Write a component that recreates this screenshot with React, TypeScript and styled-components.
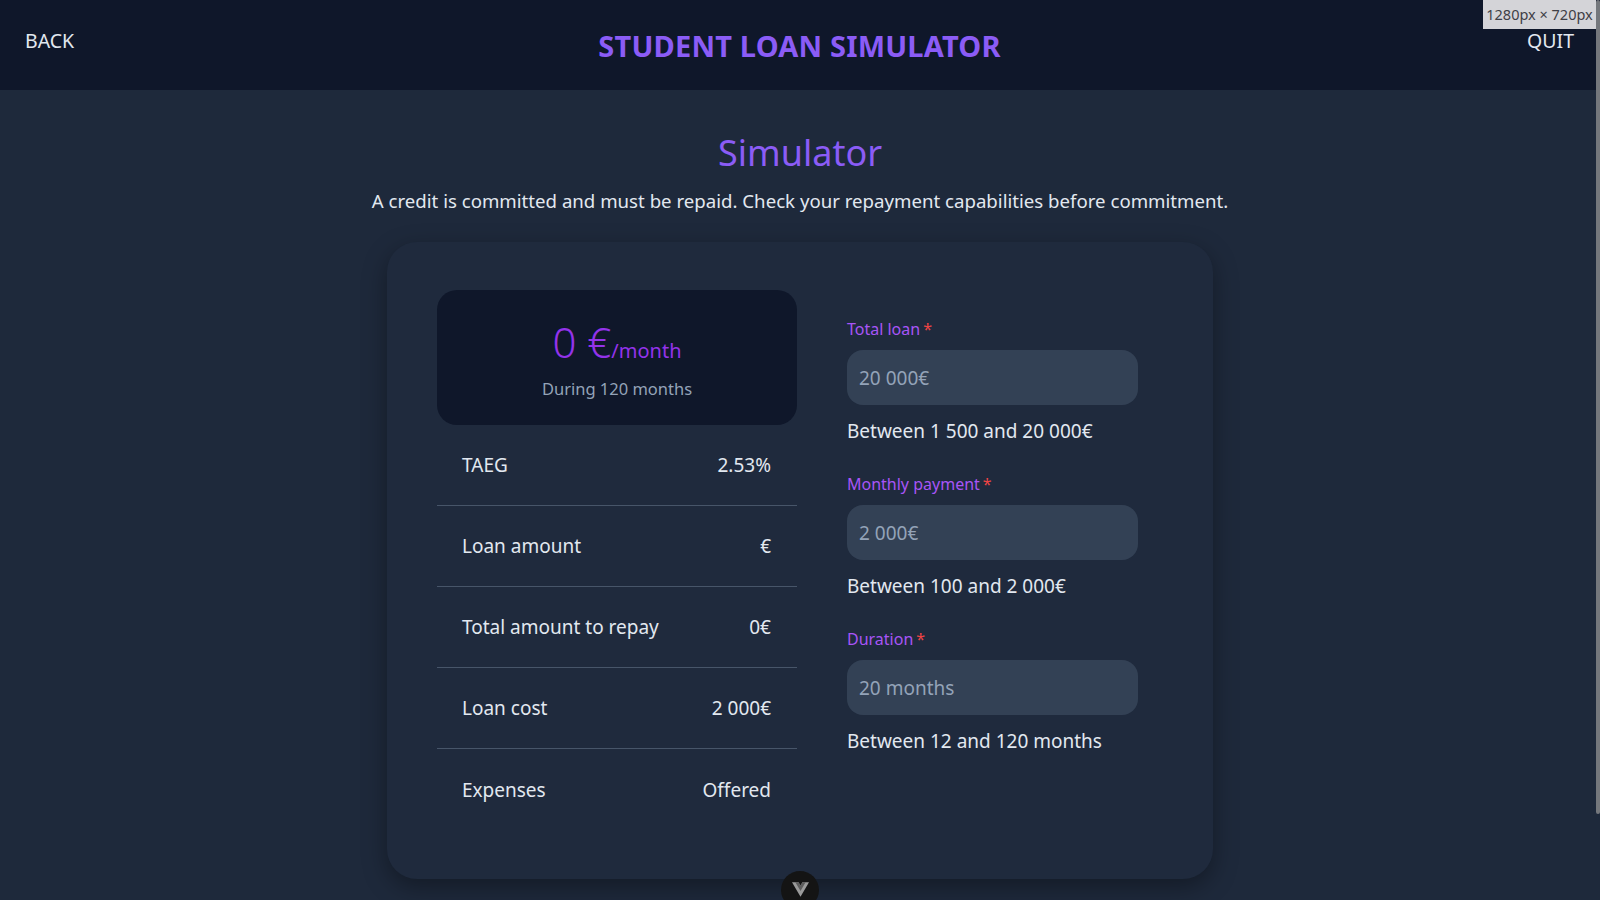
import React from "react";
import styled, { createGlobalStyle } from "styled-components";

const GlobalStyle = createGlobalStyle`
  html, body {
    margin: 0;
    padding: 0;
    background: #1e293b;
    overflow: hidden;
  }
  body {
    font-family: "Noto Sans", "Open Sans", sans-serif;
    color: #e2e8f0;
  }
  * { box-sizing: border-box; }
`;

const Page = styled.div`
  min-height: 900px;
  background: #1e293b;
`;

const Header = styled.header`
  height: 90px;
  background: #0f172a;
  display: grid;
  grid-template-columns: 1fr auto 1fr;
  align-items: start;
  padding: 0 26px 0 25px;
`;

const NavLink = styled.a<{ $right?: boolean }>`
  margin-top: 29px;
  font-size: 19.5px;
  line-height: 24px;
  color: #e2e8f0;
  text-decoration: none;
  justify-self: ${(p) => (p.$right ? "end" : "start")};
  cursor: pointer;
`;

const Brand = styled.h1`
  margin: 26px 0 0;
  font-size: 29px;
  line-height: 40px;
  font-weight: 700;
  color: #8b5cf6;
  letter-spacing: 0.2px;
`;

const Main = styled.main`
  display: flex;
  flex-direction: column;
  align-items: center;
`;

const Heading = styled.h2`
  margin: 39px 0 0;
  font-size: 36px;
  line-height: 48px;
  font-weight: 400;
  color: #8b5cf6;
`;

const Lead = styled.p`
  margin: 11px 0 0;
  font-size: 18.65px;
  line-height: 26px;
  color: #e2e8f0;
`;

const Card = styled.section`
  margin-top: 28px;
  width: 826px;
  padding: 48px 50px 49px;
  border-radius: 30px;
  background: #1f2a3d;
  box-shadow: 0 8px 24px rgba(0, 0, 0, 0.35);
  display: flex;
  gap: 50px;
`;

const LeftCol = styled.div`
  width: 360px;
  display: flex;
  flex-direction: column;
`;

const Summary = styled.div`
  height: 135px;
  background: #0f172a;
  border-radius: 20px;
  display: flex;
  flex-direction: column;
  align-items: center;
  padding-top: 27px;
`;

const Amount = styled.div`
  color: #9333ea;
  display: flex;
  align-items: baseline;
`;

const Big = styled.span`
  font-size: 42px;
  line-height: 50px;
  font-weight: 300;
`;

const Per = styled.span`
  font-size: 20px;
  font-weight: 400;
`;

const During = styled.div`
  margin-top: 11px;
  font-size: 16.5px;
  line-height: 22px;
  color: #94a3b8;
`;

const Row = styled.div<{ $last?: boolean }>`
  height: 81px;
  display: flex;
  align-items: center;
  justify-content: space-between;
  padding: 0 26px 0 25px;
  font-size: 19px;
  color: #e2e8f0;
  border-bottom: ${(p) => (p.$last ? "none" : "1px solid #475569")};
`;

const RightCol = styled.div`
  width: 316px;
  padding-top: 28px;
  display: flex;
  flex-direction: column;
  gap: 30px;
`;

const Field = styled.div`
  display: flex;
  flex-direction: column;
`;

const Label = styled.label`
  font-size: 16px;
  line-height: 22px;
  color: #a855f7;
  margin-bottom: 10px;
`;

const Req = styled.span`
  color: #ef4444;
  margin-left: 3px;
`;

const Input = styled.input`
  width: 291px;
  height: 55px;
  border: none;
  outline: none;
  border-radius: 16px;
  background: #334155;
  padding: 0 12px;
  font-family: inherit;
  font-size: 19px;
  color: #e2e8f0;
  &::placeholder {
    color: #94a3b8;
  }
`;

const Hint = styled.div`
  margin-top: 14px;
  font-size: 19px;
  line-height: 24px;
  color: #e2e8f0;
`;

const SizeBadge = styled.div`
  position: fixed;
  top: 0;
  right: 4px;
  width: 113px;
  height: 29px;
  background: #d4d4d8;
  color: #3f3f46;
  font-family: "Noto Sans", sans-serif;
  font-size: 14.5px;
  line-height: 29px;
  text-align: center;
  white-space: nowrap;
  overflow: hidden;
`;

const ScrollThumb = styled.div`
  position: fixed;
  top: 0;
  right: 0;
  width: 4px;
  height: 814px;
  border-radius: 2px;
  background: #74777c;
`;

const DevButton = styled.button`
  position: fixed;
  left: 781px;
  top: 871px;
  width: 38px;
  height: 38px;
  border-radius: 50%;
  border: none;
  background: #141414;
  display: flex;
  justify-content: center;
  padding-top: 11px;
  cursor: pointer;
`;

const rows = [
  ["TAEG", "2.53%"],
  ["Loan amount", "€"],
  ["Total amount to repay", "0€"],
  ["Loan cost", "2 000€"],
  ["Expenses", "Offered"],
];

const fields = [
  { label: "Total loan", placeholder: "20 000€", hint: "Between 1 500 and 20 000€" },
  { label: "Monthly payment", placeholder: "2 000€", hint: "Between 100 and 2 000€" },
  { label: "Duration", placeholder: "20 months", hint: "Between 12 and 120 months" },
];

export default function App() {
  return (
    <Page>
      <GlobalStyle />
      <Header>
        <NavLink>BACK</NavLink>
        <Brand>STUDENT LOAN SIMULATOR</Brand>
        <NavLink $right>QUIT</NavLink>
      </Header>
      <Main>
        <Heading>Simulator</Heading>
        <Lead>
          A credit is committed and must be repaid. Check your repayment capabilities before commitment.
        </Lead>
        <Card>
          <LeftCol>
            <Summary>
              <Amount>
                <Big>0 €</Big>
                <Per>/month</Per>
              </Amount>
              <During>During 120 months</During>
            </Summary>
            {rows.map(([k, v], i) => (
              <Row key={k} $last={i === rows.length - 1}>
                <span>{k}</span>
                <span>{v}</span>
              </Row>
            ))}
          </LeftCol>
          <RightCol>
            {fields.map((f) => (
              <Field key={f.label}>
                <Label>
                  {f.label}
                  <Req>*</Req>
                </Label>
                <Input placeholder={f.placeholder} />
                <Hint>{f.hint}</Hint>
              </Field>
            ))}
          </RightCol>
        </Card>
      </Main>
      <SizeBadge>1280px × 720px</SizeBadge>
      <ScrollThumb />
      <DevButton aria-label="devtools">
        <svg width="17" height="15" viewBox="0 0 256 221">
          <path d="M204.8 0H256L128 220.8L0 0H97.92L128 51.2L157.44 0H204.8Z" fill="#9a9a9a" />
          <path d="M50.56 0L128 132.48L204.8 0H157.44L128 51.2L97.92 0H50.56Z" fill="#5c5c5c" />
        </svg>
      </DevButton>
    </Page>
  );
}
